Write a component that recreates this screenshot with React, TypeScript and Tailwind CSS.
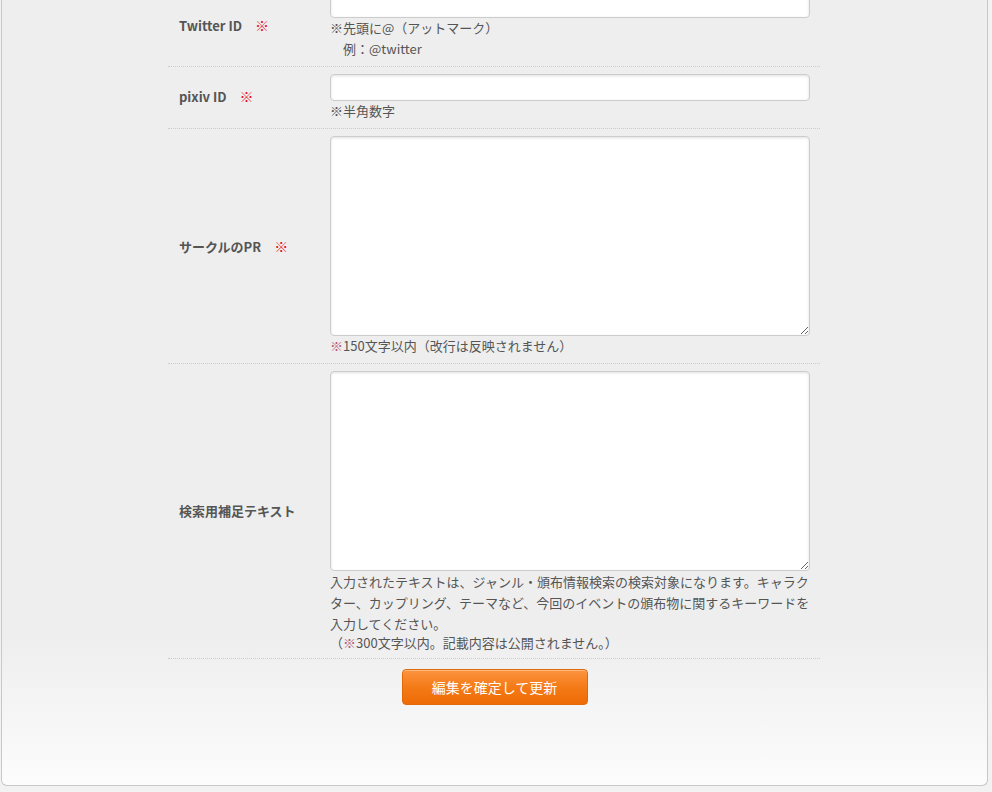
import React from "react";

const Req = () => <span className="ml-[13px] text-[14px] font-bold text-[#e8101e]">※</span>;

function Row({
  label,
  children,
  extra = "",
  labelCls = "",
}: {
  label: React.ReactNode;
  children: React.ReactNode;
  extra?: string;
  labelCls?: string;
}) {
  return (
    <div className={`flex items-center border-b border-dotted border-[#cccccc] ${extra}`}>
      <div className={`w-[162px] shrink-0 pl-[11px] text-[13px] font-bold text-[#555555] ${labelCls}`}>{label}</div>
      <div className="flex-1 pt-[7px] pb-[7px]">{children}</div>
    </div>
  );
}

const inputCls =
  "block w-[480px] rounded-[4px] border border-[#cccccc] bg-white shadow-[inset_0_1px_3px_rgba(0,0,0,0.12)] outline-none";

export default function App() {
  return (
    <div className="min-h-screen bg-[#f2f2f2] pb-[6px] font-['Noto_Sans_CJK_JP','Noto_Sans',sans-serif] text-[13px] text-[#555555]">
      <div className="ml-[1px] w-[987px] overflow-hidden rounded-b-[6px] border border-t-0 border-[#c8c8c8] bg-[linear-gradient(to_top,#fcfcfc_0px,#eeeeee_150px)] pb-[80px]">
        <div className="ml-[166px] -mt-[16px] w-[652px]">
          <Row label={<>Twitter ID<Req /></>} extra="h-[83px]">
            <input type="text" className={`${inputCls} h-[27px]`} />
            <div className="mt-[-1px] leading-[21px]">
              <div>※先頭に@（アットマーク）</div>
              <div>　例：@twitter</div>
            </div>
          </Row>
          <Row label={<>pixiv ID<Req /></>} extra="h-[62px]" labelCls="pb-[3px]">
            <input type="text" className={`${inputCls} h-[27px]`} />
            <div className="leading-[20px]">※半角数字</div>
          </Row>
          <Row label={<>サークルのPR<Req /></>} extra="h-[235px]">
            <textarea className={`${inputCls} h-[200px] resize-y`} />
            <div className="leading-[20px]">
              <span className="text-[#b85a74]">※</span>150文字以内（改行は反映されません）
            </div>
          </Row>
          <Row label="検索用補足テキスト" extra="h-[295px]">
            <textarea className={`${inputCls} h-[200px] resize-y`} />
            <div className="w-[484px] leading-[21px]">
              入力されたテキストは、ジャンル・頒布情報検索の検索対象になります。キャラクター、カップリング、テーマなど、今回のイベントの頒布物に関するキーワードを入力してください。
            </div>
            <div className="leading-[17px]">
              （<span className="text-[#b85a74]">※</span>300文字以内。記載内容は公開されません。）
            </div>
          </Row>
        </div>
        <div className="mt-[10px] flex justify-center">
          <button className="h-[36px] w-[186px] rounded-[4px] border border-[#e2690a] bg-[linear-gradient(to_bottom,#fc9440_0%,#f47b17_50%,#ee6b06_100%)] text-[14px] text-white shadow-[inset_0_1px_0_rgba(255,255,255,0.35)]">
            編集を確定して更新
          </button>
        </div>
      </div>
    </div>
  );
}
